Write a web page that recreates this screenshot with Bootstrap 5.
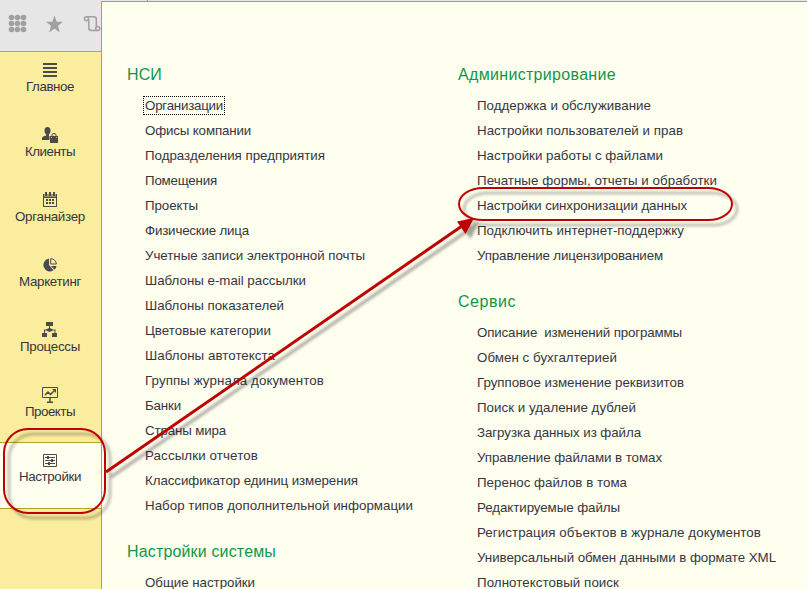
<!DOCTYPE html>
<html lang="ru">
<head>
<meta charset="utf-8">
<title>Настройки</title>
<link href="https://cdn.jsdelivr.net/npm/bootstrap@5.3.0/dist/css/bootstrap.min.css" rel="stylesheet">
<style>
body{font-family:"Liberation Sans",Arial,sans-serif;font-size:13.33px;color:#363640;background:#fffff0;height:589px;overflow:hidden}
.side{width:101px;background:#fbed9e}
.tools{height:52px;background:#e6e6e6;border-bottom:1px solid #a0a0a0;color:#a0a0a0}
.side .nav-link{height:65px;padding:10px 0 0;color:#363640;line-height:16px;width:100px}
.side .nav-link svg{display:block;margin:0 auto 1px;color:#4b4b4b}
.side .nav-link.current{background:#fffff0;height:67px;border-top:1px solid #baa31c;border-bottom:1px solid #baa31c;width:101px;padding-right:1px}
.side .nav-link.current svg{margin-bottom:0}
.strip{height:1px;background:#e6e6e6}
.panel{border-left:1px solid #b5a52c;border-top:1px solid #b5a52c;background:#fffff0;padding-top:39px}
.col-a{width:332px;padding-left:25px}
.col-b{padding-left:24px}
h2{font-size:16px;line-height:24px;margin:0;padding:22px 0 6px;height:52px;color:#109648;font-weight:400}
.links{padding-left:18px}
.col-b .links{padding-left:19px}
.links a{display:block;height:25px;line-height:25px;color:#363640;text-decoration:none;white-space:pre}
.links a.picked span{outline:1px dotted #000;outline-offset:1px}
.marks{pointer-events:none}
</style>
<script src="https://cdn.jsdelivr.net/npm/bootstrap@5.3.0/dist/js/bootstrap.bundle.min.js"></script>
</head>
<body class="position-relative">
<div class="d-flex h-100">
<aside class="side flex-shrink-0 d-flex flex-column">
<div class="tools flex-shrink-0 overflow-hidden">
<svg width="101" height="51" viewBox="0 0 101 51" fill="currentColor"><g><circle cx="11.5" cy="17.5" r="2.8"/><circle cx="17.5" cy="17.5" r="2.8"/><circle cx="23.5" cy="17.5" r="2.8"/><circle cx="11.5" cy="23.5" r="2.8"/><circle cx="17.5" cy="23.5" r="2.8"/><circle cx="23.5" cy="23.5" r="2.8"/><circle cx="11.5" cy="29.5" r="2.8"/><circle cx="17.5" cy="29.5" r="2.8"/><circle cx="23.5" cy="29.5" r="2.8"/></g><path d="M54.5 15.500l2.200 6.200h6.300l-5 4 1.800 6.800-5.300-4-5.300 4 1.800-6.800-5-4h6.300z"/><g fill="none" stroke="currentColor" stroke-width="1.500"><path d="M86.500 16.700H94q2.300 0 2.300 2.300v7.300M88.800 19.500v8.200q0 2.800 2.500 2.800h6.500"/><circle cx="86.500" cy="18.700" r="2"/><circle cx="97.700" cy="28.500" r="2"/></g></svg>
</div>
<nav class="nav flex-column text-center flex-nowrap">
<a class="nav-link" href="#"><svg width="16" height="16" fill="currentColor"><path d="M1 1h14v2H1zM1 5h14v2H1zM1 9h14v2H1zM1 13h14v2H1z"/></svg><span data-w="48">Главное</span></a>
<a class="nav-link" href="#"><svg width="16" height="16" fill="currentColor"><path d="M5.500 0C7.500 0 8.500 1.300 8.500 3.500 8.500 5.300 8 6.500 7 7.300V9h1v4H0v-1.500C0 9.500 2 9 4 8.800V7.300C3 6.500 2.500 5.300 2.500 3.500 2.500 1.300 3.500 0 5.500 0z"/><path d="M7.500 8.500H9V8q.5-2 3-2t3 2v.5h1V16H7.500z" fill="#fbed9e"/><path d="M8 9h8v7H8z"/><path d="M10 9V8q0-1.500 2-1.500T14 8v1" fill="none" stroke="currentColor"/><path d="M9.500 10v1M14.500 10v1" stroke="#fbed9e" stroke-width=".7"/></svg><span data-w="50">Клиенты</span></a>
<a class="nav-link" href="#"><svg width="16" height="16" fill="currentColor"><path d="M1 2h14v13H1zM2 6v8h12V6z" fill-rule="evenodd"/><path d="M3 0h2v4H3zM11 0h2v4h-2zM7 0h2v4H7zM4 7h2v2H4zM7 7h2v2H7zM10 7h2v2h-2zM4 10h2v2H4zM7 10h2v2H7zM10 10h2v2h-2z"/><path d="M2.500 2v2.500h3V2M6.500 2v2.500h3V2M10.500 2v2.500h3V2" fill="none" stroke="#fbed9e" stroke-width=".5"/></svg><span data-w="70">Органайзер</span></a>
<a class="nav-link" href="#"><svg width="16" height="16" fill="currentColor"><path d="M7 1.500V8l4.600 5.300A6.500 6.500 0 1 1 7 1.500zM9 9h5.500a6 6 0 0 1-2 3.700z"/><path d="M8.700 1.600V7h5.700A5.800 5.800 0 0 0 8.700 1.600z" fill="none" stroke="currentColor"/></svg><span data-w="62">Маркетинг</span></a>
<a class="nav-link" href="#"><svg width="16" height="16" fill="currentColor"><path d="M4 0h7v4H4zM0 11h5v4H0zM10 11h5v4h-5zM7 4h1v2l3 1.500h2.500V11h-1V8.500H11L7.500 10 4 8.500H3V11H2V7.500h2L7 6z"/></svg><span data-w="60">Процессы</span></a>
<a class="nav-link" href="#"><svg width="16" height="16" fill="none" stroke="currentColor"><path d="M.5.500h15v10H.5z"/><path d="M8 11v4M5 15.200h6" stroke-width="1.500"/><path d="M3 8l3-3 2.500 2.500L12 4" stroke-width="1.500"/><path d="M10 2h4v4z" fill="currentColor" stroke="none"/></svg><span data-w="50">Проекты</span></a>
<a class="nav-link current" href="#"><svg width="16" height="16" fill="none" stroke="currentColor"><path d="M1.500 1.500h13v12h-13zM3 4.500h10M3 7.500h10M3 10.500h10"/><path d="M6 3v3M10 6v3M7 9v3" stroke-width="2"/></svg><span data-w="62">Настройки</span></a>
</nav>
</aside>
<div class="flex-grow-1 d-flex flex-column">
<div class="strip flex-shrink-0"></div>
<main class="panel flex-grow-1 d-flex align-items-start overflow-hidden">
<section class="col-a flex-shrink-0">
<h2><span data-w="35">НСИ</span></h2>
<div class="links"><a class="picked" href="#"><span data-w="78">Организации</span></a><a href="#"><span data-w="106">Офисы компании</span></a><a href="#"><span data-w="180">Подразделения предприятия</span></a><a href="#"><span data-w="72">Помещения</span></a><a href="#"><span data-w="53">Проекты</span></a><a href="#"><span data-w="104">Физические лица</span></a><a href="#"><span data-w="220">Учетные записи электронной почты</span></a><a href="#"><span data-w="161">Шаблоны e-mail рассылки</span></a><a href="#"><span data-w="139">Шаблоны показателей</span></a><a href="#"><span data-w="126">Цветовые категории</span></a><a href="#"><span data-w="130">Шаблоны автотекста</span></a><a href="#"><span data-w="179">Группы журнала документов</span></a><a href="#"><span data-w="36">Банки</span></a><a href="#"><span data-w="81">Страны мира</span></a><a href="#"><span data-w="113">Рассылки отчетов</span></a><a href="#"><span data-w="213">Классификатор единиц измерения</span></a><a href="#"><span data-w="268">Набор типов дополнительной информации</span></a></div>
<h2><span data-w="149">Настройки системы</span></h2>
<div class="links"><a href="#"><span data-w="110">Общие настройки</span></a></div>
</section>
<section class="col-b">
<h2><span data-w="158">Администрирование</span></h2>
<div class="links"><a href="#"><span data-w="174">Поддержка и обслуживание</span></a><a href="#"><span data-w="206">Настройки пользователей и прав</span></a><a href="#"><span data-w="186">Настройки работы с файлами</span></a><a href="#"><span data-w="240">Печатные формы, отчеты и обработки</span></a><a href="#"><span data-w="210">Настройки синхронизации данных</span></a><a href="#"><span data-w="207">Подключить интернет-поддержку</span></a><a href="#"><span data-w="186">Управление лицензированием</span></a></div>
<h2><span data-w="58">Сервис</span></h2>
<div class="links"><a href="#"><span data-w="205">Описание  изменений программы</span></a><a href="#"><span data-w="140">Обмен с бухгалтерией</span></a><a href="#"><span data-w="207">Групповое изменение реквизитов</span></a><a href="#"><span data-w="159">Поиск и удаление дублей</span></a><a href="#"><span data-w="164">Загрузка данных из файла</span></a><a href="#"><span data-w="185">Управление файлами в томах</span></a><a href="#"><span data-w="150">Перенос файлов в тома</span></a><a href="#"><span data-w="143">Редактируемые файлы</span></a><a href="#"><span data-w="284">Регистрация объектов в журнале документов</span></a><a href="#"><span data-w="299">Универсальный обмен данными в формате XML</span></a><a href="#"><span data-w="142">Полнотекстовый поиск</span></a></div>
</section>
</main>
</div>
</div>
<svg class="marks position-absolute top-0 start-0" width="807" height="589" viewBox="0 0 807 589">
<defs><filter id="shade" x="-10%" y="-10%" width="125%" height="125%"><feDropShadow dx="5" dy="5" stdDeviation="1.800" flood-color="#000" flood-opacity=".36"/></filter></defs>
<path d="M147.500 0v1" stroke="#a0a0a0"/>
<g filter="url(#shade)">
<g fill="none" stroke="#c00000" stroke-width="2"><rect x="4" y="429" width="101" height="84" rx="24"/><rect x="459" y="188" width="273" height="32" rx="24" ry="16"/></g>
<path d="M106 472L462 226" stroke="#c00000" stroke-width="3"/><path d="M474 218L457 221.500L465.500 234z" fill="#c00000"/>
</g>
</svg>
<script>
// Track each label to its designed width
document.querySelectorAll('[data-w]').forEach(function (el) {
  el.style.letterSpacing = '0px';
  var gap = (Number(el.dataset.w) - el.getBoundingClientRect().width) / el.textContent.length;
  el.style.letterSpacing = gap.toFixed(3) + 'px';
});
</script>
</body>
</html>
